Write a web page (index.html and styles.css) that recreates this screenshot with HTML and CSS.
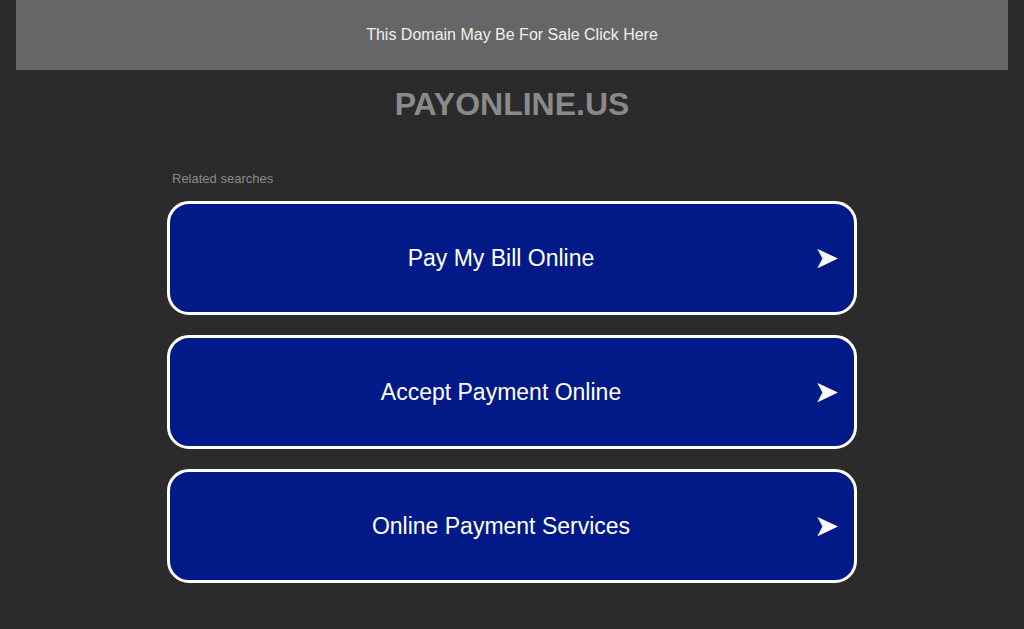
FILE: index.html
```html
<!DOCTYPE html>
<html lang="en">
<head>
    <meta charset="UTF-8">
    <title>payonline.us</title>
    <link rel="stylesheet" href="styles.css">
</head>
<body>
    <div class="sale-bar">This Domain May Be For Sale Click Here</div>

    <h1 class="domain">PAYONLINE.US</h1>

    <div class="related">
        <p class="related-title">Related searches</p>

        <a class="search-link" href="#">
            <span class="label">Pay My Bill Online</span>
            <span class="arrow">&#10148;</span>
        </a>
        <a class="search-link" href="#">
            <span class="label">Accept Payment Online</span>
            <span class="arrow">&#10148;</span>
        </a>
        <a class="search-link" href="#">
            <span class="label">Online Payment Services</span>
            <span class="arrow">&#10148;</span>
        </a>
    </div>
</body>
</html>
```

FILE: styles.css
```css
body {
    margin: 0;
    padding: 0 16px;
    background-color: #2b2b2b;
    font-family: 'Liberation Sans', Arial, sans-serif;
    color: #fff;
}

.sale-bar {
    background-color: #666;
    color: #f0f0f0;
    font-size: 16px;
    height: 70px;
    line-height: 70px;
    text-align: center;
}

.domain {
    margin: 17px 0 0;
    font-size: 32px;
    line-height: 34px;
    font-weight: bold;
    color: #8a8a8a;
    text-align: center;
}

.related {
    width: 690px;
    margin: 50px auto 0;
}

.related-title {
    margin: 0 0 14px 5px;
    font-size: 13px;
    line-height: 16px;
    color: #8a8a8a;
}

.search-link {
    display: flex;
    align-items: center;
    justify-content: center;
    position: relative;
    height: 108px;
    margin-bottom: 20px;
    border: 3px solid #fff;
    border-radius: 22px;
    background-color: #011a87;
    color: #fff;
    text-decoration: none;
    font-size: 23px;
}

.search-link .label {
    margin-right: 22px;
}

.search-link .arrow {
    position: absolute;
    right: 15px;
    font-size: 30px;
    line-height: 30px;
}
```
